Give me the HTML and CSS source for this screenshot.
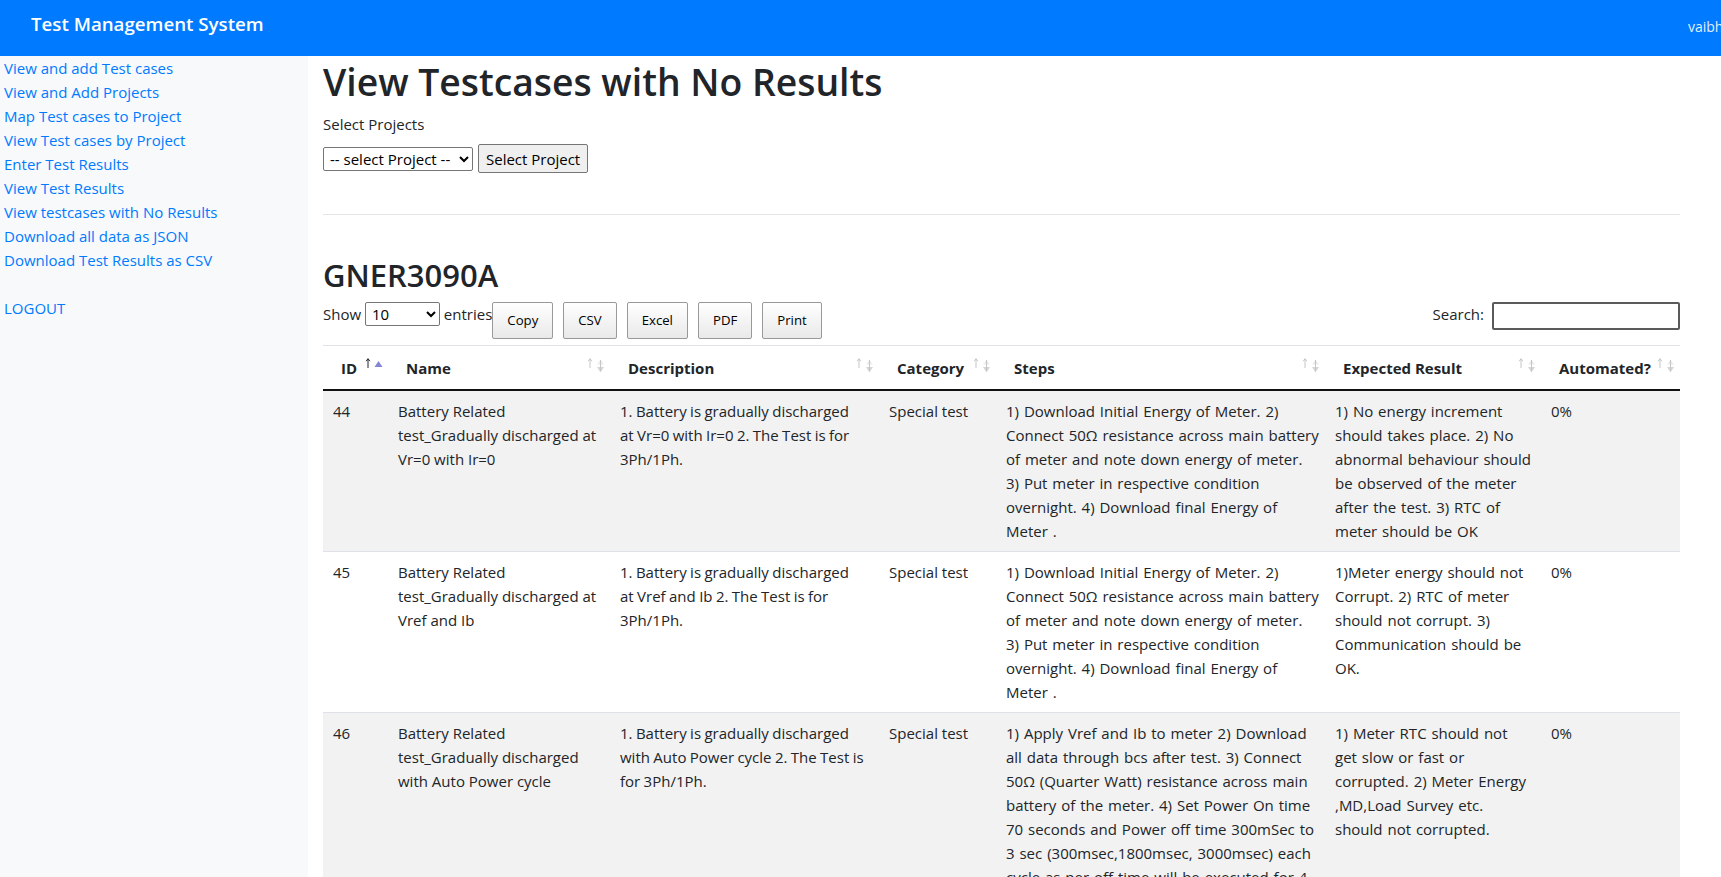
FILE: index.html
```html
<!DOCTYPE html>
<html lang="en">
<head>
<meta charset="utf-8">
<title>Test Management System</title>
<link rel="stylesheet" href="styles.css">
</head>
<body>
<nav class="navbar">
  <a class="brand" href="#">Test Management System</a>
  <div class="nav-user"><span>vaibhav.jain</span></div>
</nav>
<div class="layout">
  <aside class="sidebar">
    <a href="#">View and add Test cases</a>
    <a href="#">View and Add Projects</a>
    <a href="#">Map Test cases to Project</a>
    <a href="#">View Test cases by Project</a>
    <a href="#">Enter Test Results</a>
    <a href="#">View Test Results</a>
    <a href="#">View testcases with No Results</a>
    <a href="#">Download all data as JSON</a>
    <a href="#">Download Test Results as CSV</a>
    <a class="logout" href="#">LOGOUT</a>
  </aside>
  <main class="content">
    <h1 class="page-title">View Testcases with No Results</h1>
    <form class="project-form">
      <label class="form-label" for="project">Select Projects</label>
      <div class="project-picker">
        <select id="project" class="project-select"><option>-- select Project --</option></select>
        <button type="button" class="btn-native">Select Project</button>
      </div>
    </form>
    <hr class="divider">
    <h2 class="project-title">GNER3090A</h2>
    <div class="dt-toolbar">
      <label class="dt-length">Show <select class="length-select"><option>10</option><option>25</option><option>50</option><option>100</option></select> entries</label>
      <div class="dt-buttons">
        <button type="button" class="dt-button">Copy</button>
        <button type="button" class="dt-button">CSV</button>
        <button type="button" class="dt-button">Excel</button>
        <button type="button" class="dt-button">PDF</button>
        <button type="button" class="dt-button">Print</button>
      </div>
      <label class="dt-search">Search:<input type="search" class="search-input"></label>
    </div>
    <table class="data-table">
      <colgroup>
        <col class="c-id">
        <col class="c-name">
        <col class="c-desc">
        <col class="c-cat">
        <col class="c-steps">
        <col class="c-exp">
        <col class="c-auto">
      </colgroup>
      <thead>
        <tr>
          <th>ID<svg class="sort-icon" viewBox="0 0 20 20"><path d="M3 3v9M1.2 5.2 3 2.6l1.8 2.6" fill="none" stroke="#212529" stroke-width="1"/><path d="M9.5 11 13.5 5 17.5 11Z" fill="#8585d6"/></svg></th>
          <th>Name<svg class="sort-icon" viewBox="0 0 20 20"><path d="M3 3v9M1.2 5.2 3 2.6l1.8 2.6" fill="none" stroke="#c5c6c8" stroke-width="1"/><path d="M10 8.5 13.5 3.5 17 8.5Z" fill="#ececec"/><path d="M10 11 13.5 16.5 17 11Z" fill="#d6d6d6"/><path d="M13.5 4v11" stroke="#c5c6c8" stroke-width="1"/></svg></th>
          <th>Description<svg class="sort-icon" viewBox="0 0 20 20"><path d="M3 3v9M1.2 5.2 3 2.6l1.8 2.6" fill="none" stroke="#c5c6c8" stroke-width="1"/><path d="M10 8.5 13.5 3.5 17 8.5Z" fill="#ececec"/><path d="M10 11 13.5 16.5 17 11Z" fill="#d6d6d6"/><path d="M13.5 4v11" stroke="#c5c6c8" stroke-width="1"/></svg></th>
          <th>Category<svg class="sort-icon" viewBox="0 0 20 20"><path d="M3 3v9M1.2 5.2 3 2.6l1.8 2.6" fill="none" stroke="#c5c6c8" stroke-width="1"/><path d="M10 8.5 13.5 3.5 17 8.5Z" fill="#ececec"/><path d="M10 11 13.5 16.5 17 11Z" fill="#d6d6d6"/><path d="M13.5 4v11" stroke="#c5c6c8" stroke-width="1"/></svg></th>
          <th>Steps<svg class="sort-icon" viewBox="0 0 20 20"><path d="M3 3v9M1.2 5.2 3 2.6l1.8 2.6" fill="none" stroke="#c5c6c8" stroke-width="1"/><path d="M10 8.5 13.5 3.5 17 8.5Z" fill="#ececec"/><path d="M10 11 13.5 16.5 17 11Z" fill="#d6d6d6"/><path d="M13.5 4v11" stroke="#c5c6c8" stroke-width="1"/></svg></th>
          <th>Expected Result<svg class="sort-icon" viewBox="0 0 20 20"><path d="M3 3v9M1.2 5.2 3 2.6l1.8 2.6" fill="none" stroke="#c5c6c8" stroke-width="1"/><path d="M10 8.5 13.5 3.5 17 8.5Z" fill="#ececec"/><path d="M10 11 13.5 16.5 17 11Z" fill="#d6d6d6"/><path d="M13.5 4v11" stroke="#c5c6c8" stroke-width="1"/></svg></th>
          <th>Automated?<svg class="sort-icon" viewBox="0 0 20 20"><path d="M3 3v9M1.2 5.2 3 2.6l1.8 2.6" fill="none" stroke="#c5c6c8" stroke-width="1"/><path d="M10 8.5 13.5 3.5 17 8.5Z" fill="#ececec"/><path d="M10 11 13.5 16.5 17 11Z" fill="#d6d6d6"/><path d="M13.5 4v11" stroke="#c5c6c8" stroke-width="1"/></svg></th>
        </tr>
      </thead>
      <tbody>
        <tr>
          <td>44</td>
          <td>Battery Related test_Gradually discharged at Vr=0 with Ir=0</td>
          <td class="cell-desc">1. Battery is gradually discharged at Vr=0 with Ir=0 2. The Test is for 3Ph/1Ph.</td>
          <td>Special test</td>
          <td class="cell-steps">1) Download Initial Energy of Meter. 2) Connect 50&Omega; resistance across main battery of meter and note down energy of meter. 3) Put meter in respective condition overnight. 4) Download final Energy of Meter .</td>
          <td class="cell-exp">1) No energy increment should takes place. 2) No abnormal behaviour should be observed of the meter after the test. 3) RTC of meter should be OK</td>
          <td>0%</td>
        </tr>
        <tr>
          <td>45</td>
          <td>Battery Related test_Gradually discharged at Vref and Ib</td>
          <td class="cell-desc">1. Battery is gradually discharged at Vref and Ib 2. The Test is for 3Ph/1Ph.</td>
          <td>Special test</td>
          <td class="cell-steps">1) Download Initial Energy of Meter. 2) Connect 50&Omega; resistance across main battery of meter and note down energy of meter. 3) Put meter in respective condition overnight. 4) Download final Energy of Meter .</td>
          <td class="cell-exp">1)Meter energy should not Corrupt. 2) RTC of meter should not corrupt. 3) Communication should be OK.</td>
          <td>0%</td>
        </tr>
        <tr>
          <td>46</td>
          <td>Battery Related test_Gradually discharged with Auto Power cycle</td>
          <td class="cell-desc">1. Battery is gradually discharged with Auto Power cycle 2. The Test is for 3Ph/1Ph.</td>
          <td>Special test</td>
          <td class="cell-steps">1) Apply Vref and Ib to meter 2) Download all data through bcs after test. 3) Connect 50&Omega; (Quarter Watt) resistance across main battery of the meter. 4) Set Power On time 70 seconds and Power off time 300mSec to 3 sec (300msec,1800msec, 3000msec) each cycle as per off-time will be executed for 4 hours. 5) Download all data through bcs and check RTC.</td>
          <td class="cell-exp">1) Meter RTC should not get slow or fast or corrupted. 2) Meter Energy ,MD,Load Survey etc. should not corrupted.</td>
          <td>0%</td>
        </tr>
      </tbody>
    </table>
  </main>
</div>
</body>
</html>
```

FILE: styles.css
```css
* {
  box-sizing: border-box;
}

html,
body {
  margin: 0;
  padding: 0;
}

body {
  font-family: "Open Sans", "Noto Sans", sans-serif;
  font-size: 15px;
  line-height: 24px;
  color: #212529;
  background: #fff;
  overflow-x: hidden;
}

/* Top bar */
.navbar {
  display: flex;
  align-items: flex-start;
  height: 56px;
  padding-left: 31px;
  background: #007bff;
  overflow: hidden;
}

.brand {
  padding-top: 9px;
  font-size: 18.7px;
  font-weight: 600;
  line-height: 30px;
  color: #fff;
  text-decoration: none;
  white-space: nowrap;
}

.nav-user {
  margin-left: auto;
  width: 33px;
  padding-top: 15px;
  font-size: 14px;
  line-height: 24px;
  color: rgba(255, 255, 255, 0.9);
  white-space: nowrap;
}

/* Page layout */
.layout {
  display: flex;
}

.sidebar {
  flex: 0 0 308px;
  width: 308px;
  min-height: calc(100vh - 56px);
  background: #f8f9fa;
}

.sidebar a {
  display: block;
  padding-left: 4px;
  line-height: 24px;
  color: #007bff;
  text-decoration: none;
}

.sidebar .logout {
  margin-top: 24px;
}

.content {
  flex: 1;
  min-width: 0;
  padding: 0 41px 0 15px;
}

/* Headings & form */
.page-title {
  margin: 2px 0 6px;
  font-size: 37.3px;
  font-weight: 600;
  line-height: 48px;
}

.project-form {
  margin: 0;
}

.form-label {
  display: block;
  margin-bottom: 8px;
}

.project-picker {
  display: flex;
  align-items: center;
  gap: 5px;
}

.project-select {
  width: 150px;
  height: 24px;
  padding: 0 2px;
  font-family: inherit;
  font-size: 15px;
  color: #000;
  background: #fff;
  border: 1px solid #767676;
  border-radius: 2px;
}

.btn-native {
  height: 29px;
  padding: 0 7px;
  font-family: inherit;
  font-size: 15px;
  color: #000;
  background: #efefef;
  border: 1px solid #767676;
  border-radius: 2px;
}

.divider {
  height: 0;
  margin: 41px 0 0;
  border: 0;
  border-top: 1px solid rgba(0, 0, 0, 0.1);
}

.project-title {
  margin: 41px 0 8px;
  font-size: 31px;
  font-weight: 600;
  line-height: 38px;
}

/* DataTables toolbar */
.dt-toolbar {
  display: flex;
  align-items: flex-start;
}

.dt-length {
  line-height: 24px;
  white-space: nowrap;
}

.length-select {
  width: 75px;
  height: 24px;
  padding: 0 2px;
  vertical-align: top;
  font-family: inherit;
  font-size: 15px;
  color: #000;
  background: #fff;
  border: 1px solid #767676;
  border-radius: 2px;
}

.dt-buttons {
  display: flex;
  gap: 10px;
}

.dt-button {
  padding: 7px 14px;
  font-family: inherit;
  font-size: 13.2px;
  line-height: 21px;
  color: #000;
  background: linear-gradient(to bottom, #fff 0%, #e9e9e9 100%);
  border: 1px solid #999;
  border-radius: 2px;
}

.dt-search {
  display: flex;
  align-items: flex-start;
  gap: 8px;
  margin-left: auto;
  white-space: nowrap;
}

.search-input {
  width: 188px;
  height: 28px;
  font-family: inherit;
  font-size: 15px;
  background: #fff;
  border: 2px solid #5a5a5a;
  border-radius: 2px;
}

/* Table */
.data-table {
  width: 100%;
  margin-top: 6px;
  table-layout: fixed;
  border-collapse: separate;
  border-spacing: 0;
}

.c-id { width: 65px; }
.c-name { width: 222px; }
.c-desc { width: 269px; }
.c-cat { width: 117px; }
.c-steps { width: 329px; }
.c-exp { width: 216px; }
.c-auto { width: 139px; }

.data-table th {
  position: relative;
  padding: 10px 18px 9px;
  text-align: left;
  font-weight: 700;
  line-height: 24px;
  white-space: nowrap;
  vertical-align: bottom;
  border-top: 1px solid #dee2e6;
  border-bottom: 2px solid #111;
}

.sort-icon {
  position: absolute;
  top: 10px;
  right: 3px;
  width: 20px;
  height: 20px;
}

.data-table td {
  padding: 8px 10px;
  vertical-align: top;
  border-top: 1px solid #dee2e6;
}

.data-table td.cell-desc {
  padding-right: 14.25px;
  word-spacing: -0.5px;
}

.data-table td.cell-steps {
  padding-right: 5.5px;
  word-spacing: 1px;
}

.data-table td.cell-exp {
  padding-right: 8px;
  word-spacing: 1px;
}

.data-table tbody tr:first-child td {
  border-top: 0;
}

.data-table tbody tr:nth-child(odd) {
  background: #f2f2f2;
}
```
